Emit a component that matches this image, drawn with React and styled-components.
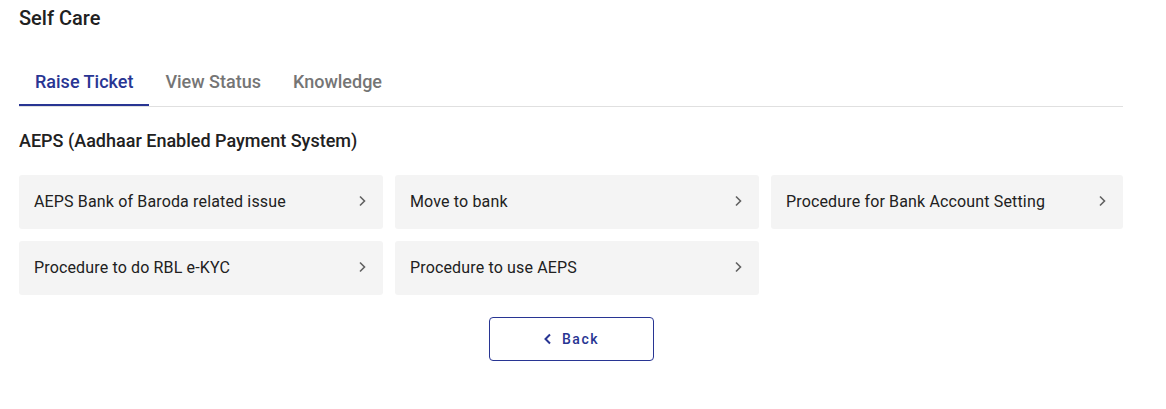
import React from 'react';
import styled, { createGlobalStyle } from 'styled-components';

const GlobalStyle = createGlobalStyle`
  *, *::before, *::after {
    box-sizing: border-box;
  }
  body {
    margin: 0;
    background: #ffffff;
    font-family: Roboto, "Liberation Sans", Arial, sans-serif;
  }
`;

const Page = styled.div`
  width: 1123px;
  padding: 6px 0 40px 19px;
`;

const Title = styled.h1`
  margin: 0;
  font-size: 20px;
  line-height: 24px;
  font-weight: 500;
  color: #212121;
`;

const TabBar = styled.div`
  display: flex;
  margin-top: 28px;
  border-bottom: 1px solid #e0e0e0;
`;

const Tab = styled.button`
  position: relative;
  height: 48px;
  padding: 0 16px 2px;
  border: none;
  background: none;
  font-family: inherit;
  font-size: 18px;
  font-weight: 500;
  color: ${(p) => (p.$active ? '#283593' : '#757575')};
  cursor: pointer;

  &::after {
    content: '';
    position: absolute;
    left: 0;
    right: 0;
    bottom: 0;
    height: 2px;
    background: ${(p) => (p.$active ? '#283593' : 'transparent')};
  }
`;

const SectionTitle = styled.h2`
  margin: 22px 0 0;
  font-size: 18px;
  line-height: 24px;
  font-weight: 500;
  color: #212121;
`;

const Grid = styled.div`
  display: grid;
  grid-template-columns: 364px 364px 1fr;
  gap: 12px;
  margin-top: 22px;
`;

const Card = styled.div`
  display: flex;
  align-items: center;
  justify-content: space-between;
  height: 54px;
  padding: 0 16px 2px 15px;
  background: #f4f4f4;
  border-radius: 3px;
  font-size: 16px;
  letter-spacing: 0.15px;
  color: #212121;
  cursor: pointer;
`;

const Actions = styled.div`
  display: flex;
  justify-content: center;
  margin-top: 22px;
`;

const BackButton = styled.button`
  display: flex;
  align-items: center;
  justify-content: center;
  gap: 9px;
  width: 165px;
  height: 44px;
  border: 1px solid #283593;
  border-radius: 4px;
  background: #ffffff;
  font-family: inherit;
  font-size: 14px;
  font-weight: 500;
  letter-spacing: 1.5px;
  color: #283593;
  cursor: pointer;
`;

const Chevron = ({ left, color = '#616161', width = 1.6 }) => (
  <svg width="10" height="12" viewBox="0 0 10 12" fill="none">
    <polyline
      points={left ? '7,1.5 2.5,6 7,10.5' : '3,1.5 7.5,6 3,10.5'}
      stroke={color}
      strokeWidth={width}
    />
  </svg>
);

const topics = [
  'AEPS Bank of Baroda related issue',
  'Move to bank',
  'Procedure for Bank Account Setting',
  'Procedure to do RBL e-KYC',
  'Procedure to use AEPS',
];

export default function App() {
  return (
    <>
      <GlobalStyle />
      <Page>
        <Title>Self Care</Title>
        <TabBar>
          <Tab $active>Raise Ticket</Tab>
          <Tab>View Status</Tab>
          <Tab>Knowledge</Tab>
        </TabBar>
        <SectionTitle>AEPS (Aadhaar Enabled Payment System)</SectionTitle>
        <Grid>
          {topics.map((t) => (
            <Card key={t}>
              <span>{t}</span>
              <Chevron />
            </Card>
          ))}
        </Grid>
        <Actions>
          <BackButton>
            <Chevron left color="#283593" width={2} />
            Back
          </BackButton>
        </Actions>
      </Page>
    </>
  );
}
